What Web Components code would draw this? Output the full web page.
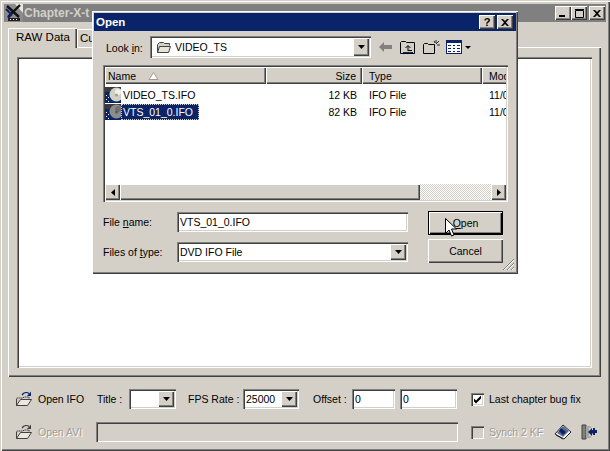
<!DOCTYPE html>
<html>
<head>
<meta charset="utf-8">
<style>
  html,body{margin:0;padding:0;width:610px;height:451px;overflow:hidden;background:#d4d0c8;font:10.5px "Liberation Sans",Arial,sans-serif;color:#000}
</style>
</head>
<body>
<main-window>
  <open-dialog slot="dialog"></open-dialog>
</main-window>

<script>
const bevel = `
  .raised{background:#d4d0c8;box-shadow:inset 1px 1px 0 #fff,inset -1px -1px 0 #404040,inset -2px -2px 0 #808080}
  .sunken{background:#fff;box-shadow:inset 1px 1px 0 #808080,inset 2px 2px 0 #404040,inset -1px -1px 0 #fff,inset -2px -2px 0 #d4d0c8}
`;
const arrowDown = `<svg width="7" height="4" viewBox="0 0 7 4"><path d="M0 0h7L3.500 4z" fill="#000"/></svg>`;

class WinButton extends HTMLElement {
  constructor(){
    super();
    this.attachShadow({mode:"open"}).innerHTML = `<style>
      ${bevel}
      :host{display:flex;width:75px;height:24px;margin-left:20px}
      .b{flex:1;display:flex;align-items:center;justify-content:center;font-size:10.5px}
      :host([default]) .b{box-shadow:inset 0 0 0 1px #000,inset 2px 2px 0 0 #fff,inset -2px -2px 0 0 #000,inset -3px -3px 0 0 #808080}
    </style><div class="b raised"><slot></slot></div>`;
  }
}
customElements.define("win-button",WinButton);

class CaptionBtn extends HTMLElement {
  constructor(){
    super();
    this.attachShadow({mode:"open"}).innerHTML = `<style>
      ${bevel}
      :host{display:flex;width:16px;height:14px}
      .b{flex:1;display:flex;align-items:center;justify-content:center}
    </style><div class="b raised"><slot></slot></div>`;
  }
}
customElements.define("caption-btn",CaptionBtn);

class WinCombo extends HTMLElement {
  constructor(){
    super();
    this.attachShadow({mode:"open"}).innerHTML = `<style>
      ${bevel}
      :host{display:flex;box-sizing:border-box;height:20px}
      .w{flex:1;display:flex;align-items:center;padding:2px;min-width:0}
      .t{flex:1;min-width:0;display:flex;align-items:center;gap:3px;padding-left:1px;white-space:nowrap}
      .a{width:16px;align-self:stretch;display:flex;align-items:center;justify-content:center;flex:none}
    </style><div class="w sunken"><div class="t"><slot></slot></div><div class="a raised">${arrowDown}</div></div>`;
  }
}
customElements.define("win-combo",WinCombo);

class WinField extends HTMLElement {
  constructor(){
    super();
    this.attachShadow({mode:"open"}).innerHTML = `<style>
      ${bevel}
      :host{display:flex;height:20px}
      .w{flex:1;display:flex;align-items:center;padding:0 3px;white-space:nowrap}
      :host([disabled]) .w{background:#d4d0c8}
    </style><div class="w sunken"><slot></slot></div>`;
  }
}
customElements.define("win-field",WinField);

class WinCheck extends HTMLElement {
  constructor(){
    super();
    const on = this.hasAttribute("checked");
    this.attachShadow({mode:"open"}).innerHTML = `<style>
      ${bevel}
      :host{display:flex;align-items:center;gap:5px;white-space:nowrap}
      :host([disabled]){color:#a09c94;text-shadow:1px 1px 0 #fff}
      .box{width:13px;height:13px;display:block;flex:none}
      :host([disabled]) .box{background:#d4d0c8}
    </style><div class="box sunken">${on?`<svg width="13" height="13" viewBox="0 0 13 13"><path d="M3 5.500l2 2 5-5v3l-5 5-2-2z" fill="#000"/></svg>`:""}</div><span><slot></slot></span>`;
  }
}
customElements.define("win-check",WinCheck);

const openFolder = `<svg width="20" height="16" viewBox="0 0 20 16">
  <path d="M3 7h6l1-1h5v2" fill="#d4d0c8" stroke="#404040" stroke-dasharray="1.500 .5"/>
  <path d="M2.500 14.500V7.500M2.500 14.500h11l4-6h-11l-4 6z" fill="#ece8dc" stroke="#404040"/>
  <path d="M8 4c2-2.500 5-3 7-1.500" fill="none" stroke="var(--arc,#0a246a)" stroke-width="1.300"/>
  <path d="M17 .5v4.500h-4z" fill="var(--arc,#0a246a)"/>
</svg>`;

class BarAction extends HTMLElement {
  constructor(){
    super();
    this.attachShadow({mode:"open"}).innerHTML = `<style>
      :host{display:flex;align-items:center;gap:4px;width:83px;flex:none;white-space:nowrap}
      :host([disabled]){color:#a09c94;text-shadow:1px 1px 0 #fff;--arc:#404040}
      svg{flex:none}
    </style>${openFolder}<span><slot></slot></span>`;
  }
}
customElements.define("bar-action",BarAction);

class FileRow extends HTMLElement {
  constructor(){
    super();
    const sel = this.hasAttribute("selected");
    this.attachShadow({mode:"open"}).innerHTML = `<style>
      :host{display:grid;grid-template-columns:161px 96px 120px 40px;height:17px;align-items:center;white-space:nowrap}
      .name{display:flex;align-items:center}
      .label{padding:1px 6px 1px 2px;line-height:14px}
      :host([selected]) .label{background:#0a246a;color:#fff;outline:1px dotted #d4d0c8;outline-offset:-1px}
      .size{text-align:right;padding-right:5px}
      .type{padding-left:7px}
      .mod{padding-left:7px}
    </style>
    <div class="name">
      <svg width="16" height="16" viewBox="0 0 16 16">
        <rect width="16" height="16" fill="#0a246a"/>
        <path d="M0 0h16v3H7L4 5H0z" fill="#3a3a3a"/>
        <circle cx="11.500" cy="7.500" r="7" fill="${sel?"#8c8c8c":"#d0d0c4"}"/>
        <circle cx="13" cy="5" r="3" fill="${sel?"#707070":"#f0f0e8"}"/>
        <circle cx="11.500" cy="8" r="1.500" fill="${sel?"#5a5a5a":"#a0a098"}"/>
        <path d="M1 8h1v1H1zM3 10h1v1H3zM1 12h1v1H1zM3 14h1v1H3z" fill="#fff"/>
      </svg>
      <span class="label">${this.getAttribute("name")}</span>
    </div>
    <div class="size">${this.getAttribute("size")}</div>
    <div class="type">IFO File</div>
    <div class="mod">11/0</div>`;
  }
}
customElements.define("file-row",FileRow);

class OpenDialog extends HTMLElement {
  constructor(){
    super();
    this.attachShadow({mode:"open"}).innerHTML = `<style>
      ${bevel}
      :host{position:absolute;left:92px;top:11px;width:426px;height:263px;display:block;z-index:10}
      .frame{box-sizing:border-box;height:100%;display:flex;flex-direction:column;padding:2px;position:relative}
      .title{height:18px;flex:none;background:#0a246a;color:#fff;font-weight:700;font-size:11.5px;display:flex;align-items:center;padding:0 3px 0 2px;justify-content:space-between}
      .btns{display:flex;gap:2px;color:#000}
      .look{display:flex;align-items:center;height:22px;margin-top:5px;padding-left:12px}
      .look .lbl{width:44px;flex:none;margin-top:2px}
      .look win-combo{width:221px;height:22px}
      .look win-combo svg{margin-left:3px}
      .tools{display:flex;align-items:center;gap:7px;margin-left:8px}
      .list{box-sizing:border-box;margin:7px 8px 0 9px;height:137px;position:relative;overflow:hidden;display:flex;flex-direction:column;padding:2px}
      .head{display:grid;grid-template-columns:161px 96px 120px 24px;height:17px;flex:none}
      .head div{box-sizing:border-box;display:flex;align-items:center;padding:0 6px 0 3px;white-space:nowrap;overflow:hidden}
      .head .r{justify-content:flex-end}
      .head .t{padding-left:7px}
      .head .m{padding-right:0;box-shadow:inset 1px 1px 0 #fff,inset 0 -1px 0 #404040,inset 0 -2px 0 #808080}
      .rows{flex:1;padding-top:2px;overflow:hidden}
      .scroll{height:16px;flex:none;display:flex;background:#d4d0c8}
      .sb{width:15px;height:16px;display:flex;align-items:center;justify-content:center;flex:none}
      .thumb{width:300px;flex:none}
      .track{flex:1;background:repeating-conic-gradient(#fff 0 25%,#d4d0c8 0 50%) 0 0/2px 2px}
      .form{display:grid;grid-template-columns:74px 231px 95px;row-gap:4px;margin:9px 0 0 9px;align-items:center}
      .up{margin-bottom:2px}
      .down{margin-top:2px}
      u{text-decoration:underline}
      .grip{position:absolute;right:3px;bottom:3px}
      .cursor{position:absolute;left:353px;top:207px}
    </style>
    <div class="frame raised">
      <div class="title"><span>Open</span>
        <div class="btns">
          <caption-btn><span style="font-weight:700;font-size:11px">?</span></caption-btn>
          <caption-btn><svg width="8" height="7" viewBox="0 0 8 7"><path d="M0 0h2l2 2 2-2h2L5 3.500 8 7H6L4 5 2 7H0l3-3.500z"/></svg></caption-btn>
        </div>
      </div>
      <div class="look">
        <span class="lbl">Look <u>i</u>n:</span>
        <win-combo>
          <svg width="16" height="13" viewBox="0 0 16 13"><path d="M1.500 11.500v-8l2-2h4l1 1h5v2" fill="#d4d0c8" stroke="#404040"/><path d="M1.500 11.500h11l2-6h-11z" fill="#e8e4d8" stroke="#404040"/></svg>
          VIDEO_TS
        </win-combo>
        <div class="tools">
          <svg width="14" height="10" viewBox="0 0 14 10"><path d="M0 5l5-5v3h8v4H5v3z" fill="#808080"/></svg>
          <svg width="16" height="14" viewBox="0 0 16 14"><path d="M.5 13.500v-11l1-1h4l1 1h8v11z" fill="#d4d0c8" stroke="#000"/><path d="M8 11V6M5.500 8L8 5.500 10.500 8M8 10.500h4" fill="none" stroke="#000"/><path d="M3 12.500h10" stroke="#0a246a"/></svg>
          <svg width="17" height="14" viewBox="0 0 17 14"><path d="M.5 13.500v-9l1-1h3l1 1h6v9z" fill="#d4d0c8" stroke="#000"/><path d="M13 0v3M14 5h3M13 4l3-3M11 1l1 2" stroke="#000" fill="none" stroke-width=".8"/></svg>
          <svg style="margin-left:-1px" width="26" height="14" viewBox="0 0 26 14"><rect x=".5" y=".5" width="15" height="13" fill="#fff" stroke="#0a246a"/><rect width="16" height="3" fill="#0a246a"/><path d="M2 5h3v1H2zM7 5h2v1H7zM11 5h3v1h-3zM2 8h3v1H2zM7 8h2v1H7zM11 8h3v1h-3zM2 11h3v1H2zM7 11h2v1H7zM11 11h3v1h-3z" fill="#0a246a"/><path d="M19 6h6l-3 3z" fill="#000"/></svg>
        </div>
      </div>
      <div class="list sunken">
        <div class="head">
          <div class="raised">Name&nbsp;&nbsp;&nbsp;&nbsp;<svg width="11" height="8" viewBox="0 0 11 8"><path d="M5.500 .5L10 7.500H1z" fill="#fff" stroke="#a09c94"/></svg></div>
          <div class="raised r">Size</div>
          <div class="raised t">Type</div>
          <div class="raised t m">Mod</div>
        </div>
        <div class="rows">
          <file-row name="VIDEO_TS.IFO" size="12 KB"></file-row>
          <file-row name="VTS_01_0.IFO" size="82 KB" selected></file-row>
        </div>
        <div class="scroll">
          <div class="sb raised"><svg width="4" height="7" viewBox="0 0 4 7"><path d="M4 0v7L0 3.500z"/></svg></div>
          <div class="thumb raised"></div>
          <div class="track"></div>
          <div class="sb raised"><svg width="4" height="7" viewBox="0 0 4 7"><path d="M0 0v7l4-3.500z"/></svg></div>
        </div>
      </div>
      <div class="form">
        <span class="up">File <u>n</u>ame:</span>
        <win-field class="up">VTS_01_0.IFO</win-field>
        <win-button default><span><u>O</u>pen</span></win-button>
        <span class="down">Files of <u>t</u>ype:</span>
        <win-combo class="down">DVD IFO File</win-combo>
        <win-button>Cancel</win-button>
      </div>
      <svg class="grip" width="13" height="13" viewBox="0 0 13 13"><path d="M12 1L1 12M12 5L5 12M12 9l-3 3" stroke="#808080" fill="none"/><path d="M12 2L2 12M12 6l-6 6M12 10l-2 2" stroke="#fff" fill="none"/></svg>
      <svg class="cursor" width="13" height="20" viewBox="0 0 13 20"><path d="M.5.5v15l3.500-3.500 2.500 6 2.500-1-2.500-6h5z" fill="#fff" stroke="#000"/></svg>
    </div>`;
  }
}
customElements.define("open-dialog",OpenDialog);

class MainWindow extends HTMLElement {
  constructor(){
    super();
    this.attachShadow({mode:"open"}).innerHTML = `<style>
      ${bevel}
      :host{display:block;width:610px;height:451px;position:relative}
      .frame{box-sizing:border-box;height:100%;display:flex;flex-direction:column;padding:4px;background:#d4d0c8;box-shadow:inset 1px 1px 0 #d4d0c8,inset 2px 2px 0 #fff,inset -1px -1px 0 #404040,inset -2px -2px 0 #808080}
      .title{height:18px;flex:none;background:#808080;color:#d4d0c8;font-weight:700;font-size:12px;display:flex;align-items:center;padding:0 2px 0 1px;justify-content:space-between}
      .tl{display:flex;align-items:center;gap:1px;white-space:nowrap}
      .btns{display:flex;align-items:center;margin-right:-1px}
      .btns caption-btn:last-child{margin-left:2px}
      .tabs{display:flex;margin:5px 0 0 4px;height:20px;flex:none;align-items:flex-end;position:relative;z-index:1;font-size:11.5px}
      .tab{box-sizing:border-box;padding:0 6px 0 3px;height:18px;display:flex;align-items:center;box-shadow:inset 1px 1px 0 #fff,inset -1px 0 0 #404040,inset -2px 0 0 #808080;white-space:nowrap}
      .tab.on{height:20px;padding:0 7px 2px 8px;margin-bottom:-1px;background:#d4d0c8}
      .panel{box-sizing:border-box;margin:0 5px 0 4px;flex:none;height:330px;padding:10px 9px 9px 9px;box-shadow:inset 1px 1px 0 #fff,inset -1px -1px 0 #404040,inset -2px -2px 0 #808080;display:flex}
      .text{flex:1}
      .bar{flex:1;display:flex;flex-direction:column;padding:12px 8px 0 10px;gap:13px}
      .row{display:flex;align-items:center;height:20px;white-space:nowrap}
      win-combo{flex:none}
    </style>
    <div class="frame">
      <div class="title">
        <div class="tl">
          <svg width="18" height="18" viewBox="0 0 18 18"><rect width="18" height="18" fill="#8c8c8c"/><path d="M10 0h8v9z" fill="#e8e8e0"/><path d="M2 2l12 11M15 1L3 13" stroke="#111" stroke-width="2.400" fill="none"/><path d="M1 5l5 5M3 14l4-4" stroke="#0a246a" stroke-width="2" fill="none"/><rect x="3" y="14" width="12" height="3" fill="#222"/><path d="M5 15h1v1H5zM8 15h1v1H8zM11 15h1v1h-1z" fill="#eee"/></svg>
          <span>Chapter-X-t</span>
        </div>
        <div class="btns">
          <caption-btn><svg width="8" height="8" viewBox="0 0 8 8"><path d="M0 6h6v2H0z"/></svg></caption-btn>
          <caption-btn><svg width="9" height="9" viewBox="0 0 9 9"><path d="M.5 1.500h8v7h-8zM0 .5h9" fill="none" stroke="#000"/></svg></caption-btn>
          <caption-btn><svg width="8" height="7" viewBox="0 0 8 7"><path d="M0 0h2l2 2 2-2h2L5 3.500 8 7H6L4 5 2 7H0l3-3.500z"/></svg></caption-btn>
        </div>
      </div>
      <div class="tabs">
        <div class="tab on">RAW Data</div>
        <div class="tab">Cu</div>
      </div>
      <div class="panel"><div class="text sunken"></div></div>
      <div class="bar">
        <div class="row">
          <bar-action>Open IFO</bar-action>
          <span style="width:32px">Title :</span>
          <win-combo style="width:47px"></win-combo>
          <span style="margin-left:12px;width:55px">FPS Rate :</span>
          <win-combo style="width:56px">25000</win-combo>
          <span style="margin-left:14px;width:39px">Offset :</span>
          <win-field style="width:43px">0</win-field>
          <win-field style="width:57px;margin-left:5px">0</win-field>
          <win-check checked style="margin-left:14px">Last chapter bug fix</win-check>
        </div>
        <div class="row">
          <bar-action disabled>Open AVI</bar-action>
          <win-field disabled style="width:362px;margin-left:-1px"></win-field>
          <win-check disabled style="margin-left:13px">Synch 2 KF</win-check>
          <svg style="margin-left:11px" width="18" height="16" viewBox="0 0 18 16"><path d="M1 10L9 1l8 7-7 7z" fill="#fff" stroke="#222"/><path d="M3 9l6-7 6 5-6 6z" fill="#5a6a90"/><path d="M7 4l5 4-3 3-4-4z" fill="#0a246a"/><path d="M2 11l7 4" stroke="#222"/></svg>
          <svg style="margin-left:9px" width="16" height="16" viewBox="0 0 16 16"><path d="M1 1h4v14H1z" fill="#808080" stroke="#404040"/><path d="M5 2h3v12H5z" fill="#a8a49c"/><path d="M9.500 3h-1M9.500 13h-1" stroke="#404040"/><path d="M7 8l4-4v2h1V4h2v2h2v3h-2v2h-2V9.500h-1V12z" fill="#0a246a"/></svg>
        </div>
      </div>
    </div>
    <slot name="dialog"></slot>`;
  }
}
customElements.define("main-window",MainWindow);
</script>
</body>
</html>
